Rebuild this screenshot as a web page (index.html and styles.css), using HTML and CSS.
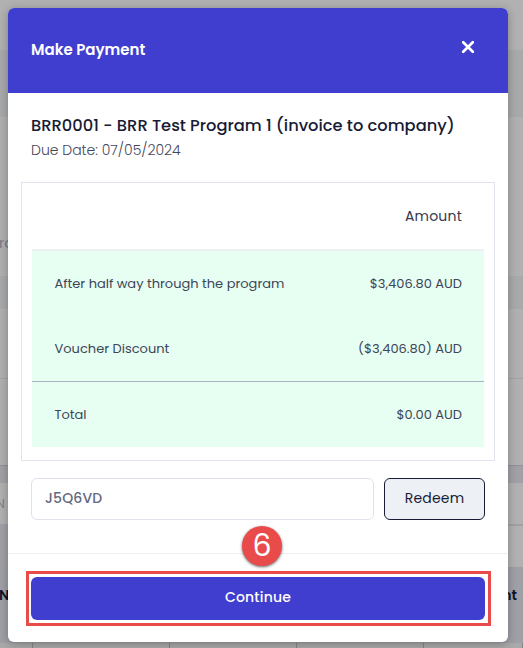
FILE: index.html
```html
<!DOCTYPE html>
<html lang="en">
<head>
<meta charset="utf-8">
<title>Make Payment</title>
<link rel="stylesheet" href="styles.css">
</head>
<body>
<div class="page">
  <div class="band band-top"></div>
  <div class="band band-gap"></div>
  <div class="band band-card"><span class="peek">ro</span></div>
  <div class="band band-gap short"></div>
  <div class="band band-panel"></div>
  <div class="band band-panel last"></div>
  <div class="band band-strip"></div>
  <div class="filters">
    <div class="filters-left"><div class="filter-input">N</div></div>
    <div class="filters-right"><div class="filter-row"></div><div class="filter-row second"></div></div>
  </div>
  <div class="table-head"><span>N</span><span>nt</span></div>
  <div class="table-row"><i></i><i></i><i></i><i></i><i></i></div>
</div>
<section class="modal">
  <header class="modal-header">
    <h1>Make Payment</h1>
    <svg class="close" viewBox="0 0 14 14"><path d="M2.2 2.2 L11.8 11.8 M11.8 2.2 L2.2 11.8"/></svg>
  </header>
  <div class="modal-body">
    <h2><span>BRR0001 - BRR Test Program 1 (invoice to company)</span></h2>
    <p class="due"><span>Due Date: 07/05/2024</span></p>
    <div class="summary">
      <div class="row head"><span class="amount">Amount</span></div>
      <div class="row item"><span>After half way through the program</span><span>$3,406.80 AUD</span></div>
      <div class="row item"><span>Voucher Discount</span><span>($3,406.80) AUD</span></div>
      <div class="row total"><span>Total</span><span>$0.00 AUD</span></div>
    </div>
    <div class="redeem-row">
      <div class="code"><span>J5Q6VD</span></div>
      <button class="redeem"><span>Redeem</span></button>
    </div>
  </div>
  <footer class="modal-footer">
    <div class="callout">
      <span class="step">6</span>
      <button class="continue"><span>Continue</span></button>
    </div>
  </footer>
</section>
</body>
</html>
```
FILE: styles.css
```css
* { box-sizing: border-box; }
body {
  margin: 0;
  width: 523px;
  height: 648px;
  overflow: hidden;
  display: grid;
  grid-template: 648px / 523px;
  font-family: Poppins, Inter, "Open Sans", sans-serif;
  color: #171b35;
}
h1, h2, p { margin: 0; }
span { white-space: nowrap; }
button { font-family: inherit; margin: 0; padding: 0; }
.page, .modal { grid-area: 1 / 1; }
.page { display: flex; flex-direction: column; background: #b0b0b0; overflow: hidden; }
.band { flex: none; }
.band-top { height: 50px; background: #b1b1b1; }
.band-gap { height: 67px; background: #a8a9ab; }
.band-card { height: 159px; padding-top: 117px; }
.peek { display: block; font-size: 14px; line-height: 18px; color: #747888; margin-left: -1px; }
.short { height: 33px; }
.band-panel { height: 70px; border-bottom: 1px solid #a3a3a5; }
.last { height: 87px; border-bottom-color: #919195; }
.band-strip { height: 17px; background: #a0a0a6; }
.filters { display: flex; justify-content: space-between; height: 84px; background: #a0a0a6; }
.filters-left { width: 100px; }
.filter-input { width: 8px; height: 41px; padding-right: 3px; background: #b1b1b1; font-size: 13px; line-height: 41px; color: #7d8190; direction: rtl; }
.filters-right { width: 100px; }
.filter-row { height: 41px; background: #b1b1b1; }
.filter-row.second { margin-top: 2px; }
.table-head { height: 76px; display: flex; justify-content: space-between; align-items: center; padding: 0 6px 20px 0; background: #9fa0a6; font-size: 14px; font-weight: 600; color: #101426; }
.table-head span:first-child { margin-left: -1px; }
.table-row { height: 5px; display: grid; grid-template-columns: 33px 137px 127px 127px 1fr; background: #a9a9a9; }
.table-row i { border-right: 1px solid #858588; }
.modal {
  width: 500px;
  height: 634px;
  margin: 8px;
  border-radius: 6px;
  background: #fff;
  box-shadow: 0 2px 10px rgba(0,0,0,.28);
  display: flex;
  flex-direction: column;
  position: relative;
}
.modal-header { height: 85px; border-radius: 6px 6px 0 0; background: #403ecf; color: #fff; display: flex; justify-content: space-between; padding: 0 33px 0 23px; }
.modal-header h1 { font-size: 15px; font-weight: 600; line-height: 83px; }
.close { width: 14px; height: 14px; margin-top: 32px; fill: none; stroke: #fff; stroke-width: 2.7; stroke-linecap: round; }
.modal-body { height: 460px; padding: 22px 23px 0; }
h2 { font-size: 16.3px; line-height: 22px; font-weight: 500; }
.due { font-size: 14px; line-height: 20px; margin-top: 3px; font-weight: 300; color: #44465a; }
.summary { margin: 22px -10px 17px; height: 279px; border: 1px solid #e2e3ee; padding: 0 10px; }
.row { display: flex; align-items: center; justify-content: space-between; padding: 0 22px 0 22.5px; height: 65px; font-size: 13px; font-weight: 400; background: #e7fef3; color: #3d4556; }
.row.head { height: 68px; background: #fff; border-bottom: 2px solid #eeeff3; justify-content: flex-end; font-size: 14px; color: #373950; }
.row.head span { letter-spacing: .2px; }
.row.item + .item { height: 66px; border-bottom: 1px solid #a9b1ba; }
.redeem-row { display: flex; gap: 10px; height: 42px; }
.code { flex: 1; border: 1px solid #e2e2ee; border-radius: 6px; font-size: 14px; line-height: 38px; font-weight: 500; color: #646880; padding-left: 13px; letter-spacing: .15px; }
.redeem { width: 101px; border: 1px solid #171b35; border-radius: 6px; background: #edf1f5; font-size: 14px; line-height: 38px; color: #171b35; padding-bottom: 2px; letter-spacing: .2px; }
.modal-footer { height: 89px; border-top: 1px solid #eeeef2; padding: 17px 17px 0 18px; }
.callout { position: relative; height: 55px; border: 3px solid #e94b4b; padding: 3px 3px 3px 2px; }
.continue { display: block; width: 454px; height: 43px; border: 0; border-radius: 6px; background: #403ecf; color: #fff; font-size: 14px; line-height: 38px; padding-bottom: 4px; font-weight: 500; letter-spacing: .2px; }
.step { position: absolute; left: 213px; top: -48px; width: 40px; height: 40px; border-radius: 50%; background: #e94b4b; color: #fff; font-size: 30px; line-height: 40px; text-align: center; box-shadow: 0 1px 3px rgba(0,0,0,.6); }
```
